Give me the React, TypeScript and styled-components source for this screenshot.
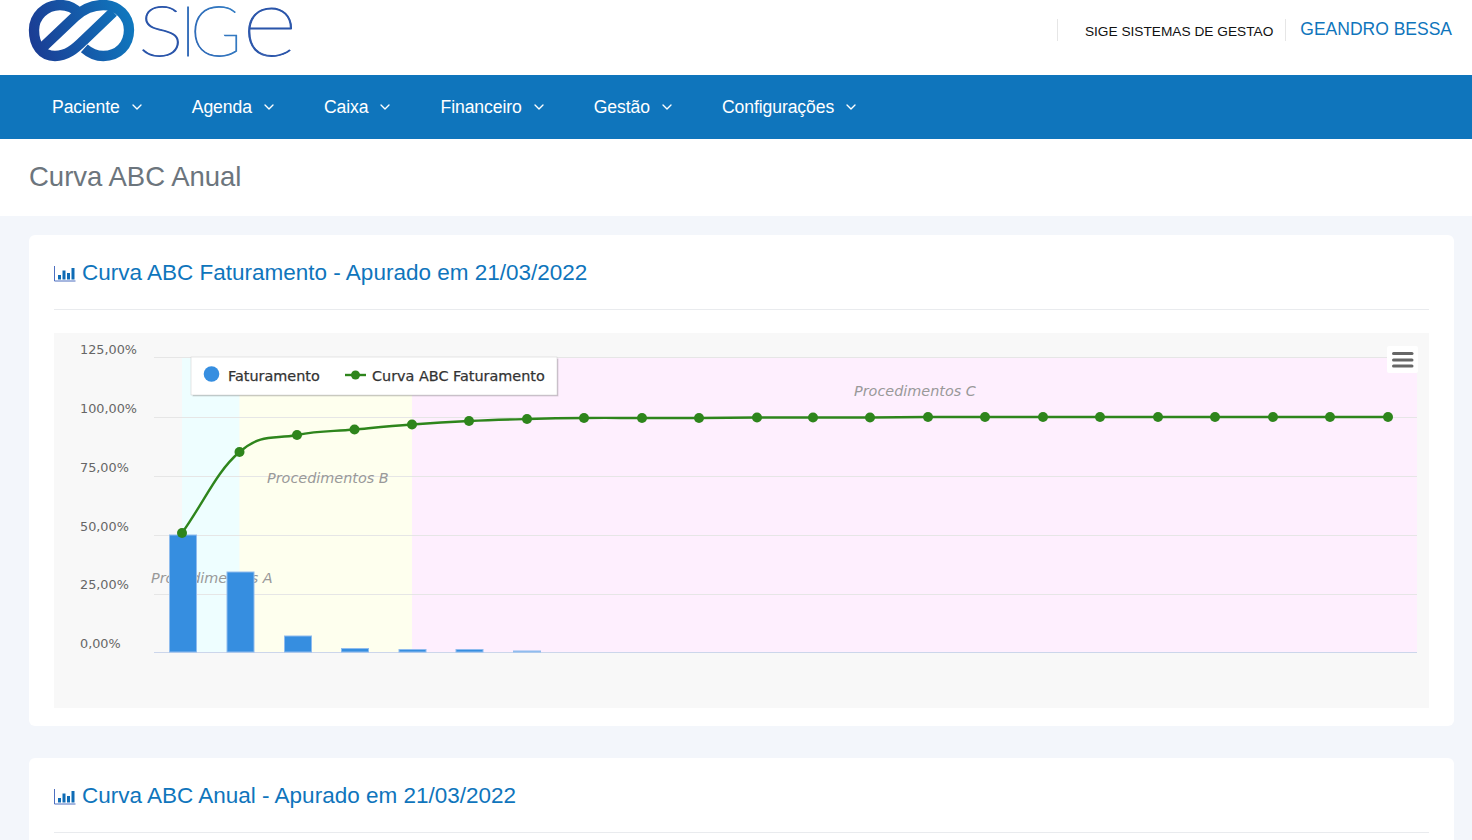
import React from 'react';
import styled, { createGlobalStyle } from 'styled-components';
import { ChevronDown } from 'lucide-react';

const Global = createGlobalStyle`
  html, body { margin: 0; padding: 0; height: 840px; overflow: hidden; background: #f3f6fb; }
  body { font-family: "Liberation Sans", Arial, sans-serif; }
`;

const Page = styled.div`display: flex; flex-direction: column;`;
const TopBar = styled.header`
  height: 75px; background: #fff; display: flex; align-items: center; justify-content: space-between;
  padding: 0 20px 0 29px; box-sizing: border-box; overflow: hidden;
`;
const LogoSvg = styled.svg`display: block; width: 270px; height: 66px; margin-top: -10px; overflow: visible;`;
const UserArea = styled.div`display: flex; align-items: stretch; height: 22px; margin-top: -15px;`;
const Company = styled.div`
  border-left: 1px solid #e6e6e6; border-right: 1px solid #e6e6e6; padding: 0 12px 0 27px;
  font-size: 13.7px; line-height: 26px; color: #111; white-space: nowrap; height: 22px;
`;
const UserName = styled.div`
  padding-left: 14px; font-size: 17.5px; line-height: 20px; color: #0f75bc; white-space: nowrap;
`;
const NavBar = styled.nav`
  height: 64px; background: #0f75bc; display: flex; align-items: center; padding-left: 52px; gap: 47.100px;
`;
const NavItem = styled.a`
  display: flex; align-items: center; gap: 9px; color: #fff; font-size: 17.6px; letter-spacing: -0.1px; white-space: nowrap;
`;
const TitleBar = styled.div`
  height: 77px; background: #fff; display: flex; align-items: center; padding-left: 29px; box-sizing: border-box;
`;
const PageTitle = styled.h1`
  margin: 0; font-size: 27.5px; font-weight: 400; color: #6c757d; position: relative; top: -1px;
`;
const Content = styled.main`
  padding: 19px 18px 0 29px; display: flex; flex-direction: column; gap: 32px;
`;
const Card = styled.section`
  background: #fff; border-radius: 6px; padding: 0 25px 18px; box-sizing: border-box;
`;
const CardHead = styled.div`
  height: 74px; display: flex; align-items: center; gap: 6px; border-bottom: 1px solid #e9ebee; box-sizing: content-box;
`;
const CardTitle = styled.h2`
  margin: 0; font-size: 22.5px; font-weight: 400; color: #0f75bc; white-space: nowrap; position: relative; top: 1px;
`;
const IconSvg = styled.svg`display: block; margin-top: 4px; flex: none;`;
const ChartFrame = styled.div`margin-top: 23px; height: 375px; background: #f8f8f8;`;
const ChartSvg = styled.svg`display: block; width: 100%; height: 375px;`;
const AxisLabel = styled.text`font: 12.8px "DejaVu Sans", Verdana, sans-serif; fill: #666;`;
const LegendText = styled.text`font: 14.4px "DejaVu Sans", Verdana, sans-serif; fill: #333; stroke: #333; stroke-width: 0.25px;`;
const BandLabel = styled.text`font: italic 14.4px "DejaVu Sans", Verdana, sans-serif; fill: #999;`;
const LogoLetter = styled.text<{ $size: number }>`
  font-family: Lato, sans-serif; font-weight: 100; font-size: ${p => p.$size}px;
  fill: url(#letGrad); stroke: url(#letGrad); stroke-width: 0.9px;
`;

const BarChartIcon = () => (
  <IconSvg width="22" height="16" viewBox="0 0 22 16" aria-hidden="true">
    <path d="M0.5 0V15H21.5" fill="none" stroke="#4d6fc0" strokeWidth="1" />
    <path d="M4 9h3v4.5H4zM8.5 4.5h3v9h-3zM13 7h3v6.5h-3zM17.5 2h3v11.500h-3z" fill="#0f6cb5" />
  </IconSvg>
);

const Logo = () => (
  <LogoSvg viewBox="0 0 270 66" aria-label="SIGE">
    <defs>
      <linearGradient id="infGrad" gradientUnits="userSpaceOnUse" x1="12" y1="150" x2="327" y2="60">
        <stop offset="0" stopColor="#1b3a92" />
        <stop offset="1" stopColor="#0f79bf" />
      </linearGradient>
      <linearGradient id="letGrad" gradientUnits="userSpaceOnUse" x1="110" y1="60" x2="270" y2="0">
        <stop offset="0" stopColor="#2a55aa" />
        <stop offset="1" stopColor="#3a94d2" />
      </linearGradient>
    </defs>
    <g transform="translate(-4 0) scale(0.3333)" fill="none" stroke="url(#infGrad)" strokeWidth="31" strokeLinecap="butt">
      <path d="M55 140 L150 50 C175 27 200 15 235 15 C280 15 312 50 312 90 C312 135 280 168 235 168 C215 168 195 160 178 145" />
      <path d="M265 36 L175 122 C150 147 125 168 90 168 C50 168 27 135 27 90 C27 50 60 15 105 15 C130 15 150 25 165 42" />
    </g>
    <g transform="translate(109 55.500) scale(1.24 1)"><LogoLetter $size={70} x="0" y="0">S</LogoLetter></g>
    <LogoLetter $size={70} x="150.500 161" y="55.500">IG</LogoLetter>
    <g transform="translate(213 55.500) scale(1.12 1)"><LogoLetter $size={96} x="0" y="0">e</LogoLetter></g>
  </LogoSvg>
);

const xs = [182, 239.5, 297, 354.5, 412, 469, 527, 584, 642, 699, 757, 813, 870, 928, 985, 1043, 1100, 1158, 1215, 1273, 1330, 1388];
const ys = [533, 452, 435, 429.5, 424.5, 421, 419, 418, 418, 418, 417.5, 417.5, 417.5, 417, 417, 417, 417, 417, 417, 417, 417, 417];

const splinePath = () => {
  const slope = (i: number) =>
    i <= 0 || i >= xs.length - 1 ? 0 : (ys[i + 1] - ys[i - 1]) / (xs[i + 1] - xs[i - 1]);
  let p = `M${xs[0]} ${ys[0]}`;
  for (let i = 1; i < xs.length; i++) {
    const h = (xs[i] - xs[i - 1]) / 2.5;
    const m0 = slope(i - 1), m1 = slope(i);
    const c1y = i === 1 ? ys[0] + ((ys[1] - ys[0]) / 2.5) : ys[i - 1] + m0 * h;
    p += ` C${(xs[i - 1] + h).toFixed(2)} ${c1y.toFixed(2)} ${(xs[i] - h).toFixed(2)} ${(ys[i] - m1 * h).toFixed(2)} ${xs[i]} ${ys[i]}`;
  }
  return p;
};

const grid = [357, 417, 476, 535, 594];
const axis: [string, number, number][] = [
  ['125,00%', 80, 354], ['100,00%', 80, 413], ['75,00%', 80, 472], ['50,00%', 80, 531], ['25,00%', 80, 589], ['0,00%', 80, 648],
];
const bars: [number, number][] = [[169.500, 535], [227, 572], [284.500, 636], [341.500, 648.500], [399, 649.500], [456, 649.500], [513.500, 651]];

const FatChart = () => (
  <ChartSvg viewBox="54 333 1375 375">
    <rect x="182" y="357" width="57.500" height="295" fill="#eefeff" />
    <rect x="239.500" y="357" width="172.500" height="295" fill="#feffee" />
    <rect x="412" y="357" width="1005" height="295" fill="#feeffe" />
    {grid.map(y => <line key={y} x1="154" x2="1417" y1={y + 0.5} y2={y + 0.5} stroke="#e6e6e6" />)}
    <line x1="154" x2="1417" y1="652.500" y2="652.500" stroke="#ccd6eb" />
    {axis.map(([t, x, y]) => <AxisLabel key={t} x={x} y={y}>{t}</AxisLabel>)}
    <BandLabel x="151" y="583">Procedimentos A</BandLabel>
    <BandLabel x="267" y="483">Procedimentos B</BandLabel>
    <BandLabel x="854" y="396">Procedimentos C</BandLabel>
    {bars.map(([x, y]) => (
      <rect key={x} x={x} y={y} width="27" height={652 - y} fill="#368ee0" stroke="#8fbcee" strokeWidth="1" />
    ))}
    <path d={splinePath()} fill="none" stroke="#2e851c" strokeWidth="2.4" />
    {xs.map((x, i) => <circle key={x} cx={x} cy={ys[i]} r="5" fill="#2e851c" />)}
    <rect x="192.500" y="358.500" width="366" height="38" fill="#000" opacity="0.12" />
    <rect x="193" y="359" width="365" height="37" fill="#000" opacity="0.1" />
    <rect x="191" y="357" width="366" height="38" fill="#fff" stroke="#ccc" strokeWidth="0.5" />
    <circle cx="211.500" cy="374" r="7.800" fill="#368ee0" />
    <LegendText x="228" y="381">Faturamento</LegendText>
    <line x1="345" x2="366" y1="375" y2="375" stroke="#2e851c" strokeWidth="2.4" />
    <circle cx="355.500" cy="375" r="4.500" fill="#2e851c" />
    <LegendText x="372" y="381">Curva ABC Faturamento</LegendText>
    <rect x="1387" y="346" width="31" height="27" rx="2" fill="#fff" />
    {[353.500, 360, 366].map(y => (
      <line key={y} x1="1393.500" x2="1412" y1={y} y2={y} stroke="#666" strokeWidth="3" strokeLinecap="round" />
    ))}
  </ChartSvg>
);

const menu = ['Paciente', 'Agenda', 'Caixa', 'Financeiro', 'Gestão', 'Configurações'];

export default function App() {
  return (
    <Page>
      <Global />
      <TopBar>
        <Logo />
        <UserArea>
          <Company>SIGE SISTEMAS DE GESTAO</Company>
          <UserName>GEANDRO BESSA</UserName>
        </UserArea>
      </TopBar>
      <NavBar>
        {menu.map(m => (
          <NavItem key={m}>{m}<ChevronDown size={16} strokeWidth={2} /></NavItem>
        ))}
      </NavBar>
      <TitleBar><PageTitle>Curva ABC Anual</PageTitle></TitleBar>
      <Content>
        <Card>
          <CardHead><BarChartIcon /><CardTitle>Curva ABC Faturamento - Apurado em 21/03/2022</CardTitle></CardHead>
          <ChartFrame><FatChart /></ChartFrame>
        </Card>
        <Card>
          <CardHead><BarChartIcon /><CardTitle>Curva ABC Anual - Apurado em 21/03/2022</CardTitle></CardHead>
        </Card>
      </Content>
    </Page>
  );
}
